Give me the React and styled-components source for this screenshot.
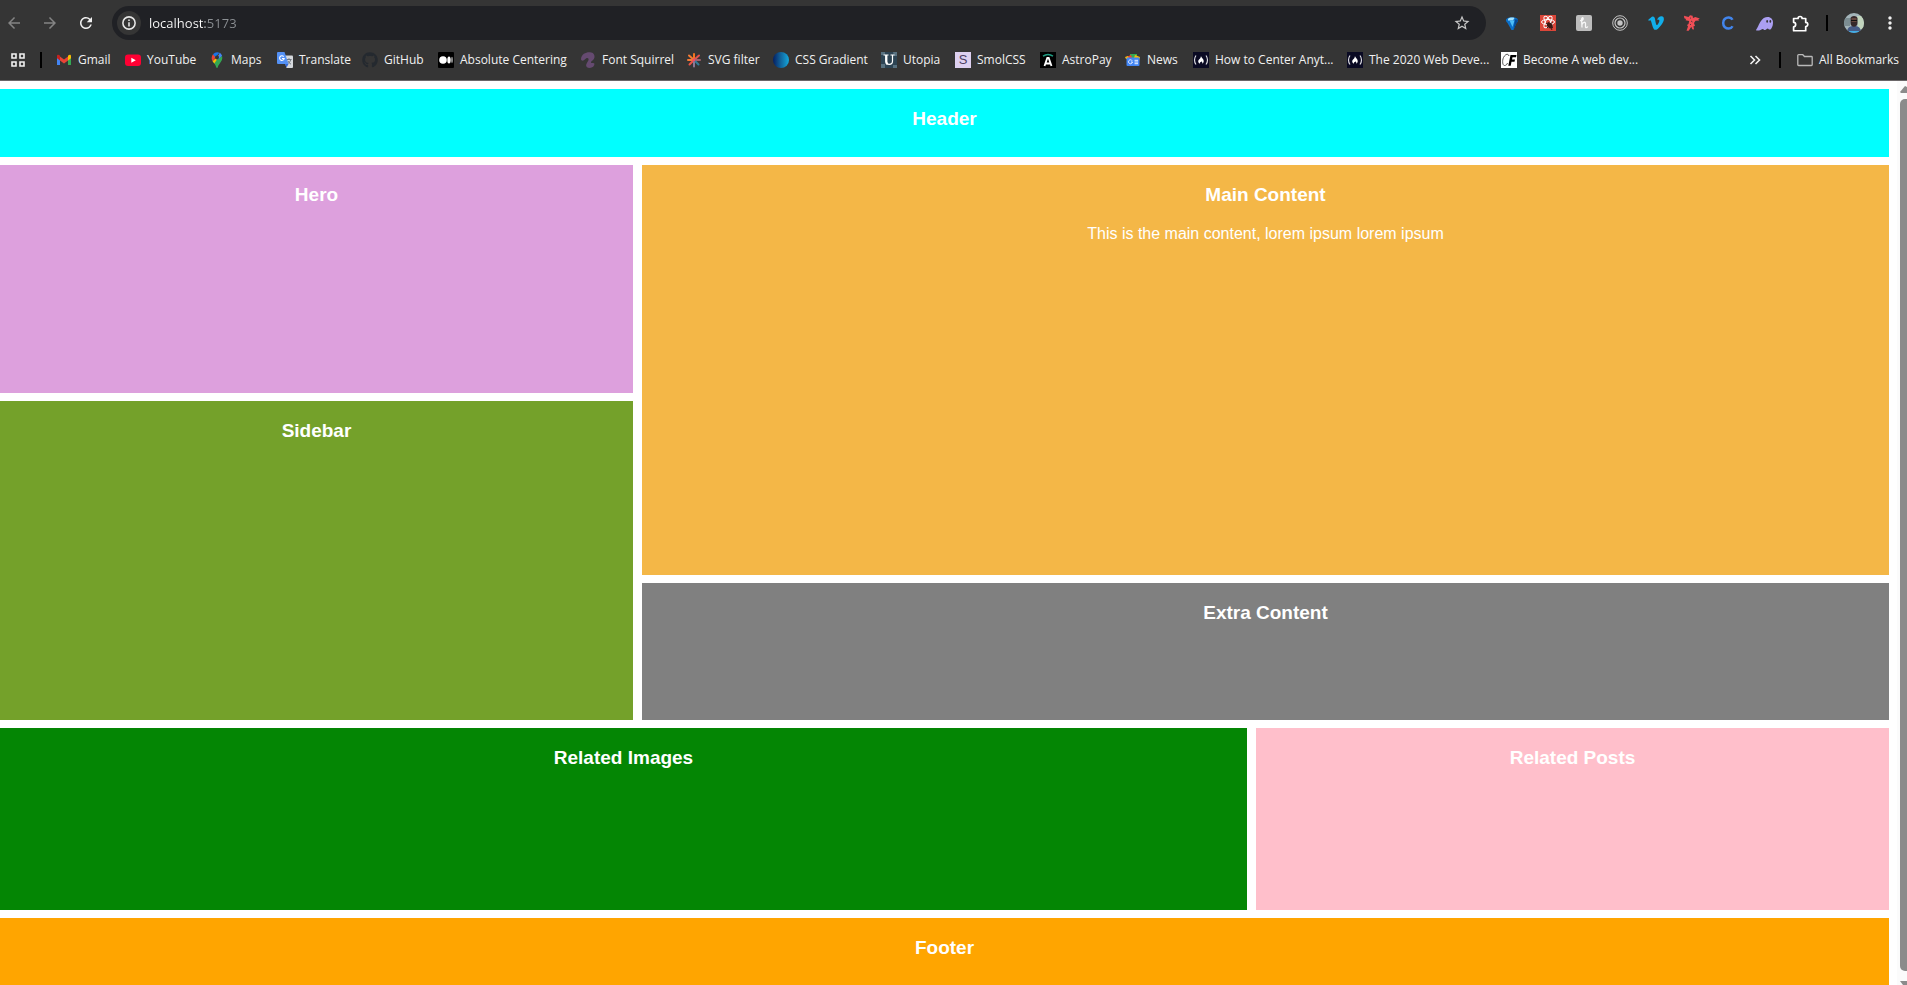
import React from "react";
import styled, { createGlobalStyle } from "styled-components";
import {
  MdArrowBack,
  MdArrowForward,
  MdRefresh,
  MdStarBorder,
  MdMoreVert,
} from "react-icons/md";
import { FaGithub, FaVimeoV } from "react-icons/fa";

const GlobalStyle = createGlobalStyle`
  *, *::before, *::after { box-sizing: border-box; }
  body {
    margin: 0;
    background: #fff;
    font-family: "Liberation Sans", Arial, sans-serif;
  }
  svg { display: block; flex: none; }
`;

const Window = styled.div`
  display: flex;
  flex-direction: column;
  height: 100vh;
  overflow: hidden;
`;

const Chrome = styled.header`
  flex: none;
  background: #353535;
  border-bottom: 1px solid #6b6769;
  color: #f1f1f1;
  font-family: "Segoe UI", "Open Sans", "Noto Sans", sans-serif;
`;

const Toolbar = styled.div`
  display: flex;
  align-items: center;
  height: 40px;
  padding-top: 6px;
`;

const IconButton = styled.button`
  display: flex;
  flex: none;
  align-items: center;
  justify-content: center;
  width: 36px;
  height: 34px;
  padding: 0;
  border: 0;
  background: none;
  color: ${(p) => (p.$dim ? "#848484" : "#f1f1f1")};
`;

const NavButtons = styled.nav`
  display: flex;
  width: 112px;
  margin-left: -4px;
`;

const AddressBar = styled.form`
  display: flex;
  flex: 1;
  align-items: center;
  height: 34px;
  margin-left: 4px;
  padding: 0 6px 0 5px;
  border-radius: 17px;
  background: #202125;
`;

const SiteInfo = styled.button`
  display: flex;
  align-items: center;
  justify-content: center;
  width: 24px;
  height: 24px;
  padding: 0;
  border: 0;
  border-radius: 12px;
  background: #353535;
  color: #e6e6e6;
`;

const Address = styled.input`
  flex: 1;
  min-width: 0;
  height: 24px;
  margin-left: 8px;
  padding: 0;
  border: 0;
  outline: 0;
  font-family: inherit;
  font-size: 13px;
  color: #fff;
  background: linear-gradient(90deg, #fff 56px, #8c9094 56px);
  -webkit-background-clip: text;
  background-clip: text;
  -webkit-text-fill-color: transparent;
`;

const Extensions = styled.div`
  display: flex;
  align-items: center;
  margin-left: 8px;
  margin-right: -1px;
`;

const Divider = styled.span`
  flex: none;
  width: 2px;
  height: 16px;
  margin: 0 ${(p) => p.$gap || 8}px;
  background: #000;
`;

const BookmarksBar = styled.nav`
  display: flex;
  align-items: center;
  height: 40px;
  padding: 0 8px 0 10px;
`;

const AppsButton = styled(IconButton)`
  width: 16px;
  height: 16px;
`;

const Bookmark = styled.a`
  display: flex;
  flex: none;
  align-items: center;
  gap: 6px;
  width: ${(p) => p.$width}px;
  color: inherit;
  font-size: 12px;
  line-height: 16px;
  text-decoration: none;
  white-space: nowrap;
`;

const Overflow = styled(IconButton)`
  width: 16px;
  height: 16px;
  margin-left: auto;
`;

const AllBookmarks = styled.button`
  display: flex;
  align-items: center;
  gap: 6px;
  padding: 0;
  border: 0;
  background: none;
  color: inherit;
  font: 12px/16px "Segoe UI", "Open Sans", "Noto Sans", sans-serif;
  white-space: nowrap;
`;

const Viewport = styled.div`
  display: flex;
  flex: 1;
  min-height: 0;
`;

const PageGrid = styled.main`
  display: grid;
  flex: 1;
  align-content: start;
  gap: 8px 9px;
  padding: 8px 8px 8px 0;
  grid-template-columns: 633fr 605fr 633fr;
  grid-template-rows: 68px 228px 174px 137px 182px 68px;
  grid-template-areas:
    "header header header"
    "hero main main"
    "sidebar main main"
    "sidebar extra extra"
    "images images posts"
    "footer footer footer";
`;

const Panel = styled.section`
  grid-area: ${(p) => p.$area};
  background: ${(p) => p.$color};
  color: #fff;
  text-align: center;
`;

const PanelTitle = styled.h3`
  margin: 19px 0;
  font-size: 19px;
  line-height: 21px;
`;

const PanelText = styled.p`
  margin: 0;
  font-size: 16px;
  line-height: 20px;
`;

const Scrollbar = styled.div`
  display: flex;
  flex: none;
  flex-direction: column;
  align-items: flex-end;
  gap: 6px;
  width: 10px;
  padding-top: 5px;
  background: #fbfbfb;
  color: #8b8b8b;
`;

const Thumb = styled.div`
  flex: 1;
  width: 7px;
  border-radius: 5px 0 0 5px;
  background: #8b8b8b;
`;

const Svg = ({ size = 16, children }) => (
  <svg width={size} height={size} viewBox="0 0 16 16" aria-hidden="true">
    {children}
  </svg>
);

const AppsIcon = () => (
  <Svg>
    <path
      d="M2 2h4v4H2zM10 2h4v4h-4zM2 10h4v4H2zM10 10h4v4h-4z"
      fill="none"
      stroke="#f1f1f1"
      strokeWidth="1.6"
    />
  </Svg>
);

const GmailIcon = () => (
  <Svg>
    <path d="M1 4v9h3V7z" fill="#4285f4" />
    <path d="M15 4v9h-3V7z" fill="#34a853" />
    <path d="M4 4.6l4 3 4-3V8.5l-4 3-4-3z" fill="#ea4335" />
    <path d="M1 4.2c0-1.6 1.6-1.9 3-.5v4.8L1 6.3z" fill="#c5221f" />
    <path d="M15 4.2c0-1.6-1.6-1.9-3-.5v4.8l3-2.2z" fill="#fbbc04" />
  </Svg>
);

const YouTubeIcon = () => (
  <Svg>
    <rect y="2.5" width="16" height="11.5" rx="3" fill="#ff0033" />
    <path d="M6.3 5.8v5L10.8 8.3z" fill="#fff" />
  </Svg>
);

const MapsIcon = () => (
  <Svg>
    <path d="M3.6 9.2C5 11.200 6.600 12.500 7.200 15.200c.3 1 1.300 1 1.600 0C9.400 12.500 13.300 9.500 13.300 5.600L8 6z" fill="#34a853" />
    <path d="M3.600 9.300L10 2.500 8 7.500 5.300 11.500z" fill="#fbbc04" />
    <path d="M4 2.200L7 5 3.500 9.200C2.300 7 2.300 4.200 4 2.200z" fill="#ea4335" />
    <path d="M4 2.200C5.700.1 8.400-.4 10.500.7L6.400 5.200z" fill="#1a73e8" />
    <path d="M10.500.7c1.400.7 2.300 1.900 2.600 3.300L8 9z" fill="#4285f4" />
    <path d="M13.100 4c.5 3-1 5-2.900 7L7 9.500z" fill="#34a853" />
    <circle cx="8" cy="5.600" r="2" fill="#353535" />
  </Svg>
);

const TranslateIcon = () => (
  <Svg>
    <path d="M6 3.500h9a1 1 0 0 1 1 1V15a1 1 0 0 1-1 1H9.500z" fill="#d5d8dc" />
    <path d="M9.500 7.500h5M12 6.200v1.300M13.800 7.500c-.6 2.300-2 3.700-3.600 4.700M10.800 8.800c.7 1.500 1.800 2.600 3.200 3.400" stroke="#6f7780" fill="none" />
    <path d="M1 0h6.500L11.500 12H1a1 1 0 0 1-1-1V1a1 1 0 0 1 1-1z" fill="#5491f5" />
    <path d="M8 12h3.500L9.500 15.500z" fill="#3367d6" />
    <path d="M6.700 4.600A2.300 2.300 0 1 0 7.200 6.500H5" stroke="#fff" strokeWidth="1.100" fill="none" />
  </Svg>
);

const MediumIcon = () => (
  <Svg>
    <rect width="16" height="16" rx="1" fill="#000" />
    <circle cx="5" cy="8" r="3.800" fill="#fff" />
    <ellipse cx="11" cy="8" rx="1.700" ry="3.500" fill="#fff" />
    <ellipse cx="14" cy="8" rx=".7" ry="3.200" fill="#ccc" />
  </Svg>
);

const SquirrelIcon = () => (
  <Svg>
    <path
      d="M1 7C1.500 2 6 0 10 0.300c3.500.3 4.800 2.500 4.500 5C14.200 8 11.500 8.700 11 10c-.3 1 .8 1.400 2.500.9l1 .9c0 2.200-2 4.200-4.700 4.200C7 16 5.600 14.500 6.300 12.300 7 10 9.200 8.500 8.500 6.800 7.800 5.500 6 6 4.800 7.600 3.500 9.300 1 9 1 7z"
      fill="#654a70"
    />
  </Svg>
);

const AsteriskIcon = () => (
  <Svg>
    <g strokeWidth="2" strokeLinecap="round">
      <path d="M8 8V2" stroke="#f47421" />
      <path d="M8 8L3 3.500M8 8H2" stroke="#f47b35" />
      <path d="M8 8l5-4.500" stroke="#e3534f" />
      <path d="M8 8L3.500 12.500" stroke="#eb5547" />
      <path d="M8 8h6" stroke="#a0616d" />
      <path d="M8 8v6.500" stroke="#8c7796" />
      <path d="M8 8l4.500 4.500" stroke="#337c98" />
    </g>
    <circle cx="8" cy="8" r="1.500" fill="#f04c68" />
  </Svg>
);

const GradientIcon = () => (
  <Svg>
    <defs>
      <linearGradient id="css-gradient">
        <stop offset="0" stopColor="#041f63" />
        <stop offset="0.450" stopColor="#116098" />
        <stop offset="1" stopColor="#15a8dc" />
      </linearGradient>
    </defs>
    <circle cx="8" cy="8" r="8" fill="url(#css-gradient)" />
  </Svg>
);

const Tile = styled.span`
  display: flex;
  flex: none;
  align-items: center;
  justify-content: center;
  width: 16px;
  height: 16px;
  background: ${(p) => p.$bg};
  color: ${(p) => p.$fg};
  font: ${(p) => p.$font};
`;

const UtopiaIcon = () => (
  <Svg>
    <rect width="16" height="16" fill="#2d4454" />
    <path d="M0 0h4v3H0zM12 0h4v4h-3zM0 12h4v4H0zM12 13h4v3h-4z" fill="#587180" />
    <path d="M2.500 3h5M9.500 3h4M5 3v6c0 4.500 6.500 4.500 6.500 0V3" stroke="#fff" strokeWidth="1.200" fill="none" />
    <path d="M5.300 3v6.500c0 1.200.5 2 1.300 2.500" stroke="#fff" strokeWidth="2.200" fill="none" />
  </Svg>
);

const AstroIcon = () => (
  <Svg>
    <rect width="16" height="16" fill="#000" />
    <path d="M3 4.200C6 2.200 10 2.200 13 4.200" stroke="#1f9d83" strokeWidth="1.500" fill="none" />
    <path d="M4.500 14L7.300 6h1.400l2.800 8M5.500 11.500h5" stroke="#fff" strokeWidth="1.800" fill="none" />
  </Svg>
);

const NewsIcon = () => (
  <Svg>
    <path d="M5 2h7v5H5z" fill="#34a853" />
    <path d="M1 5l5-2 2 5H2z" fill="#ea4335" />
    <path d="M10 3l5 2-1 4H8z" fill="#fbbc04" />
    <path d="M0 5l3-1 1 3H1z" fill="#fbbc04" />
    <rect x="1.500" y="5.500" width="13" height="8.500" rx="1" fill="#4285f4" />
    <path d="M7.200 8.700A2 2 0 1 0 7.500 10H6M13 8.300H9.500M9.500 10H13M9.500 11.700H13" stroke="#e6efff" fill="none" />
  </Svg>
);

const FreeCodeCampIcon = () => (
  <Svg>
    <rect width="16" height="16" fill="#0a0a23" />
    <path d="M3 3.500c-2 2.500-2 6.500 0 9M13 3.500c2 2.500 2 6.500 0 9" stroke="#d8d8df" strokeWidth="1.200" fill="none" />
    <path d="M8 4c.4 2 3 3 2.700 5.500-.1 1-.7 1.700-1.500 2.300.3-1.200 0-2-.7-2.500-.2.900-.8 1-1.200.7-.5.600-.5 1.200-.2 1.800C4.500 10.500 5 8.500 6.300 7.300 7.500 6.200 7.800 5.200 8 4z" fill="#fff" />
  </Svg>
);

const CfIcon = () => (
  <Svg>
    <rect width="16" height="16" fill="#fff" />
    <path d="M8 4C7.500 1.500 4.500 1.500 2.500 5.500 1 9 1.500 13.500 3.500 13.500c1.500 0 2.500-1 3-2.500" stroke="#444" strokeWidth=".9" fill="none" />
    <path d="M9.500 3H15.500l-.5 2.300h-3.500L11 7.500h3l-.5 2.200h-3l-.8 4H7.300z" fill="#000" />
  </Svg>
);

const InfoIcon = () => (
  <Svg size={14}>
    <circle cx="8" cy="8" r="7" fill="none" stroke="currentColor" strokeWidth="1.800" />
    <path d="M8 7v5M8 4v1.800" stroke="currentColor" strokeWidth="1.800" />
  </Svg>
);

const GemIcon = () => (
  <Svg>
    <path d="M2 4.500C3.500 1.500 12.500 1.500 14 4.500c.3 1.500-.5 2.500-1.500 3.500L9.500 15h-2L3.500 8C2.500 7 1.700 6 2 4.500z" fill="#0b6fc8" />
    <path d="M4 4C5 2.500 9 2.300 10.500 3L9 5.500H4z" fill="#a5e4ff" />
    <path d="M5.500 5.500h5L8.500 12z" fill="#4dbdf8" />
    <path d="M11 4.500h3c0 2-1 3-1.800 4L9.500 15z" fill="#07468f" />
  </Svg>
);

const ReactDevIcon = () => (
  <Svg>
    <rect width="16" height="16" fill="#db4639" />
    <g fill="none" stroke="#fff">
      <ellipse cx="8" cy="7" rx="6.500" ry="2.500" />
      <ellipse cx="8" cy="7" rx="6.500" ry="2.500" transform="rotate(60 8 7)" />
      <ellipse cx="8" cy="7" rx="6.500" ry="2.500" transform="rotate(120 8 7)" />
    </g>
    <path d="M6 8l7 5M7 13l5.500-6M8 7l4 8" stroke="#3a1713" />
    <ellipse cx="9.800" cy="10.500" rx="2.500" ry="3.300" transform="rotate(-45 9.800 10.500)" fill="#3a1713" />
  </Svg>
);

const HoneyIcon = () => (
  <Svg>
    <rect width="16" height="16" rx="2" fill="#bdbdbd" />
    <path d="M4 5.500c2 .5 3.300-.7 3.200-2C7 2 5.500 2.800 5.600 4.800L6 12.500M6 9.500C7 7 9.500 6.500 9.500 8.500V12c0 1 1.500 1 2.300-.5" stroke="#f7f7f7" strokeWidth="1.300" fill="none" />
  </Svg>
);

const TargetIcon = () => (
  <Svg>
    <g fill="none" stroke="#c4c4c4">
      <circle cx="8" cy="8" r="7.300" />
      <circle cx="8" cy="8" r="5" strokeWidth="1.200" />
    </g>
    <circle cx="8" cy="8" r="2.700" fill="#c4c4c4" />
  </Svg>
);

const VimeoIcon = () => <FaVimeoV size={18} color="#11aeea" />;

const BirdIcon = () => (
  <Svg>
    <path d="M0 .8L4.500 2 6 0.200l2.600.6L9 3l2.300-1 4.500 1.500-1.600 1 1 1-3.700.3L10 8l1 3-1.500.3.500 3.200-1.700-.2-1-2.500-2.600 4H2.500L4 11.500 3 10l1.500-1L5.200 6 1.600 5.200 2 4 .3 3.300z" fill="#f14e56" />
    <path d="M6 2.800l1 .6M7 6l1.500 1M6 9l1 1" stroke="#353535" strokeWidth=".8" />
  </Svg>
);

const CIcon = () => (
  <Svg>
    <path d="M12.500 4.800C11 1.800 7 1.800 4.700 4 2.700 6 2.700 10 4.700 12c2.300 2.200 6.300 2.200 7.800-.8" stroke="#4285ec" strokeWidth="2.500" fill="none" />
  </Svg>
);

const GhostIcon = () => (
  <Svg size={17}>
    <path d="M0 14C1.500 12 2.200 9.500 4 6.500 6 3 8.500 1.800 11 1.800c3 0 5 2.200 5 5.200 0 3.500-1.500 6.500-3 6.700-1.200.2-1.200-1-2-1-1 0-1.300 1.500-2.600 1.500-1.200 0-1.200-1-2-1-1.200 0-2 1.500-3.800 1.500C1.500 14.700.5 14.800 0 14z" fill="#ab9ff2" />
    <ellipse cx="10.500" cy="6" rx=".8" ry="1.200" fill="#353535" />
    <ellipse cx="13.500" cy="6" rx=".8" ry="1.200" fill="#353535" />
  </Svg>
);

const PuzzleIcon = () => (
  <Svg size={17}>
    <path d="M1.500 3.300h4.200a1.900 1.900 0 0 1 3.800 0h3.400v3.700a1.900 1.900 0 0 1 0 3.900v3.900H1.500v-3.600c2.600 0 2.600-4.300 0-4.300z" fill="none" stroke="#fff" strokeWidth="1.600" strokeLinejoin="round" />
  </Svg>
);

const Avatar = () => (
  <svg width="20" height="20" viewBox="0 0 20 20" aria-hidden="true">
    <defs>
      <clipPath id="avatar-clip">
        <circle cx="10" cy="10" r="10" />
      </clipPath>
    </defs>
    <g clipPath="url(#avatar-clip)">
      <path d="M0 0h20v20H0z" fill="#a3b4b9" />
      <path d="M13 3h7v13h-6z" fill="#c2d5be" />
      <path d="M0 5h6v8H0z" fill="#7c8d92" />
      <path d="M3 20c0-6 3-7 7-7s7 1 7 7z" fill="#475c87" />
      <path d="M6.500 5.500C6.500 2 13.500 2 13.500 5.500V10c0 5-7 5-7 0z" fill="#35282a" />
      <path d="M7.500 5h5v4h-5z" fill="#65473f" />
      <path d="M7 7.500h6" stroke="#111" />
      <path d="M5 18h10v2H5z" fill="#42aee6" />
    </g>
  </svg>
);

const ChevronsIcon = () => (
  <Svg>
    <path d="M3.500 4l4 4-4 4M8.500 4l4 4-4 4" fill="none" stroke="#f1f1f1" strokeWidth="1.600" />
  </Svg>
);

const FolderIcon = () => (
  <Svg>
    <path d="M.8 3.500a.8.800 0 0 1 .8-.8h4.200L7.500 4.500h6.900a.8.800 0 0 1 .8.800v7.400a.8.800 0 0 1-.8.800H1.600a.8.800 0 0 1-.8-.8z" fill="none" stroke="#b9b9b9" strokeWidth="1.300" />
  </Svg>
);

const bookmarks = [
  { name: "Gmail", width: 69, icon: <GmailIcon /> },
  { name: "YouTube", width: 84, icon: <YouTubeIcon /> },
  { name: "Maps", width: 68, icon: <MapsIcon /> },
  { name: "Translate", width: 85, icon: <TranslateIcon /> },
  { name: "GitHub", width: 76, icon: <FaGithub size={16} color="#24292f" /> },
  { name: "Absolute Centering", width: 142, icon: <MediumIcon /> },
  { name: "Font Squirrel", width: 106, icon: <SquirrelIcon /> },
  { name: "SVG filter", width: 87, icon: <AsteriskIcon /> },
  { name: "CSS Gradient", width: 108, icon: <GradientIcon /> },
  { name: "Utopia", width: 74, icon: <UtopiaIcon /> },
  {
    name: "SmolCSS",
    width: 85,
    icon: (
      <Tile $bg="#ddd0f0" $fg="#4b3d63" $font='13px/16px "Liberation Sans", sans-serif' aria-hidden="true">
        S
      </Tile>
    ),
  },
  { name: "AstroPay", width: 85, icon: <AstroIcon /> },
  { name: "News", width: 68, icon: <NewsIcon /> },
  { name: "How to Center Anyt...", width: 154, icon: <FreeCodeCampIcon /> },
  { name: "The 2020 Web Deve...", width: 154, icon: <FreeCodeCampIcon /> },
  { name: "Become A web dev...", width: 154, icon: <CfIcon /> },
];

const extensions = [
  { name: "Gem", icon: <GemIcon /> },
  { name: "React debugger", icon: <ReactDevIcon /> },
  { name: "Coupons", icon: <HoneyIcon /> },
  { name: "Target", icon: <TargetIcon /> },
  { name: "Vimeo", icon: <VimeoIcon /> },
  { name: "Bird", icon: <BirdIcon /> },
  { name: "Clipper", icon: <CIcon /> },
  { name: "Wallet", icon: <GhostIcon /> },
  { name: "Extensions", icon: <PuzzleIcon /> },
];

const panels = [
  { area: "header", title: "Header", color: "#00ffff" },
  { area: "hero", title: "Hero", color: "#dda0dd" },
  { area: "sidebar", title: "Sidebar", color: "#74a12a" },
  {
    area: "main",
    title: "Main Content",
    color: "#f4b747",
    text: "This is the main content, lorem ipsum lorem ipsum",
  },
  { area: "extra", title: "Extra Content", color: "#808080" },
  { area: "images", title: "Related Images", color: "#048604" },
  { area: "posts", title: "Related Posts", color: "#ffbfcb" },
  { area: "footer", title: "Footer", color: "#ffa500" },
];

export default function App() {
  return (
    <Window>
      <GlobalStyle />
      <Chrome>
        <Toolbar>
          <NavButtons aria-label="History">
            <IconButton $dim aria-label="Back"><MdArrowBack size={18} /></IconButton>
            <IconButton $dim aria-label="Forward"><MdArrowForward size={18} /></IconButton>
            <IconButton aria-label="Reload"><MdRefresh size={18} /></IconButton>
          </NavButtons>
          <AddressBar onSubmit={(e) => e.preventDefault()}>
            <SiteInfo type="button" aria-label="Site information"><InfoIcon /></SiteInfo>
            <Address aria-label="Address" defaultValue="localhost:5173" spellCheck={false} />
            <IconButton type="button" aria-label="Bookmark this page"><MdStarBorder size={18} color="#c8c8c8" /></IconButton>
          </AddressBar>
          <Extensions>
            {extensions.map((ext) => (
              <IconButton key={ext.name} aria-label={ext.name}>{ext.icon}</IconButton>
            ))}
            <Divider />
            <IconButton aria-label="Profile"><Avatar /></IconButton>
            <IconButton aria-label="Menu"><MdMoreVert size={20} /></IconButton>
          </Extensions>
        </Toolbar>
        <BookmarksBar aria-label="Bookmarks">
          <AppsButton aria-label="Apps"><AppsIcon /></AppsButton>
          <Divider $gap={14} />
          {bookmarks.map((b) => (
            <Bookmark key={b.name} href="#" $width={b.width}>
              {b.icon}
              <span>{b.name}</span>
            </Bookmark>
          ))}
          <Overflow aria-label="More bookmarks"><ChevronsIcon /></Overflow>
          <Divider $gap={16} />
          <AllBookmarks><FolderIcon />All Bookmarks</AllBookmarks>
        </BookmarksBar>
      </Chrome>
      <Viewport>
        <PageGrid>
          {panels.map((p) => (
            <Panel key={p.area} $area={p.area} $color={p.color}>
              <PanelTitle>{p.title}</PanelTitle>
              {p.text && <PanelText>{p.text}</PanelText>}
            </Panel>
          ))}
        </PageGrid>
        <Scrollbar aria-hidden="true">
          <svg width="7" height="7" viewBox="0 0 7 7"><path d="M0 6L5 0l2 1v6H1z" fill="currentColor" /></svg>
          <Thumb />
          <svg width="7" height="8" viewBox="0 0 7 8"><path d="M0 4h7v4H3z" fill="currentColor" /></svg>
        </Scrollbar>
      </Viewport>
    </Window>
  );
}
